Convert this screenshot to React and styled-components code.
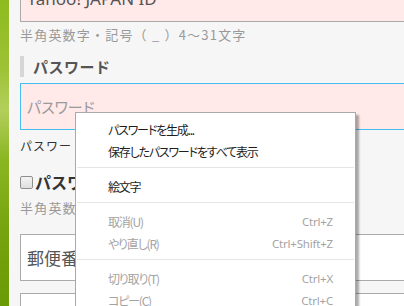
import React from 'react'
import styled, { createGlobalStyle } from 'styled-components'

const GlobalStyle = createGlobalStyle`
  html, body {
    margin: 0;
    padding: 0;
    overflow: hidden;
    background: #f6f6f6;
  }
  * { box-sizing: border-box; }
`

const Page = styled.div`
  position: relative;
  display: flex;
  width: 404px;
  height: 306px;
  overflow: hidden;
  font-family: "Noto Sans CJK JP", "Noto Sans", sans-serif;
`

const Strip = styled.div`
  flex: 0 0 10px;
  background: linear-gradient(
    180deg,
    #8fbb1e 0%,
    #9cc235 22%,
    #b3cf5c 36%,
    #8ab622 52%,
    #76a40e 75%,
    #6a9a06 100%
  );
  border-right: 1px solid #fbfbfb;
`

const Main = styled.div`
  flex: 1;
  display: flex;
  flex-direction: column;
  padding-left: 10px;
  background: #f6f6f6;
`

const Field = styled.input`
  flex: none;
  width: 420px;
  height: 47px;
  margin-top: ${p => p.$gap}px;
  padding: 0 6px;
  border: 1px solid ${p => (p.$focus ? '#45bdf2' : '#aaaaaa')};
  background: ${p => (p.$error ? '#ffe9e9' : '#ffffff')};
  font-family: ${p => (p.$latin ? '"Noto Sans", sans-serif' : '"Noto Sans CJK JP", sans-serif')};
  font-size: ${p => p.$size}px;
  font-feature-settings: "palt";
  color: #555;
  outline: none;
  &::placeholder {
    color: ${p => p.$hint};
    opacity: 1;
  }
`

const Hint = styled.div`
  margin-top: ${p => p.$gap}px;
  line-height: 20px;
  font-size: 13px;
  letter-spacing: 1.2px;
  color: #999;
  white-space: nowrap;
`

const SectionTitle = styled.h2`
  margin: 11px 0 0;
  height: 24px;
  padding-left: 9px;
  border-left: 4px solid #d6d6d6;
  display: flex;
  align-items: center;
  font-size: 15px;
  font-weight: 700;
  letter-spacing: 0.5px;
  color: #555;
`

const Note = styled.div`
  margin-top: 6px;
  line-height: 20px;
  font-size: 12px;
  letter-spacing: 1px;
  color: #333;
  white-space: nowrap;
`

const Meter = styled.div`
  margin-top: 4px;
  width: 300px;
  height: 6px;
  background: #dcdcdc;
`

const CheckRow = styled.label`
  margin-top: 11px;
  height: 22px;
  display: flex;
  align-items: center;
  gap: 2px;
  font-size: 16px;
  font-weight: 700;
  color: #333;
  white-space: nowrap;
`

const Box = styled.span`
  width: 13px;
  height: 13px;
  border: 1px solid #8f8f8f;
  border-radius: 2px;
  background: linear-gradient(#f4f4f4, #dedede);
`

const Menu = styled.div`
  position: absolute;
  left: 75px;
  top: 112px;
  width: 281px;
  padding-top: 5px;
  background: #fff;
  border: 1px solid #a9a9a9;
  box-shadow: 3px 3px 2px rgba(0, 0, 0, 0.32);
`

const Item = styled.div`
  height: 22px;
  padding: 0 22px 0 32px;
  display: flex;
  align-items: center;
  justify-content: space-between;
  font-size: 12px;
  letter-spacing: -1.2px;
  font-feature-settings: "palt";
  color: ${p => (p.$disabled ? '#a3a3a3' : '#1e1e1e')};
  white-space: nowrap;
`

const Keys = styled.span`
  font-family: "Noto Sans", sans-serif;
  font-size: 11.5px;
  letter-spacing: -0.2px;
`

const Divider = styled.div`
  height: 1px;
  margin: 5px 1px 7px;
  background: #e6e6e6;
`

const menu = [
  { label: 'パスワードを生成...' },
  { label: '保存したパスワードをすべて表示' },
  'sep',
  { label: '絵文字' },
  'sep',
  { label: '取消(U)', keys: 'Ctrl+Z', off: true },
  { label: 'やり直し(R)', keys: 'Ctrl+Shift+Z', off: true },
  'sep',
  { label: '切り取り(T)', keys: 'Ctrl+X', off: true },
  { label: 'コピー(C)', keys: 'Ctrl+C', off: true },
]

const App = () => {
  return (
    <Page>
      <GlobalStyle />
      <Strip />
      <Main>
        <Field $gap={-25} $error $latin $size={17} $hint="#555" placeholder="Yahoo! JAPAN ID" />
        <Hint $gap={3}>半角英数字・記号（ _ ）4～31文字</Hint>
        <SectionTitle>パスワード</SectionTitle>
        <Field $gap={6} $error $focus $size={15} $hint="#9a9a9a" type="password" placeholder="パスワード" />
        <Note>パスワードの安全性をチェック</Note>
        <Meter />
        <CheckRow>
          <Box />
          パスワードを表示する
        </CheckRow>
        <Hint $gap={5}>半角英数字・記号（ _ ）4～31文字</Hint>
        <Field $gap={16} $size={17} $hint="#555" placeholder="郵便番号" />
        <Field $gap={12} $size={17} $hint="#555" placeholder="都道府県" />
      </Main>
      <Menu>
        {menu.map((m, i) =>
          m === 'sep' ? (
            <Divider key={i} />
          ) : (
            <Item key={i} $disabled={m.off}>
              <span>{m.label}</span>
              {m.keys && <Keys>{m.keys}</Keys>}
            </Item>
          )
        )}
      </Menu>
    </Page>
  )
}

export default App
